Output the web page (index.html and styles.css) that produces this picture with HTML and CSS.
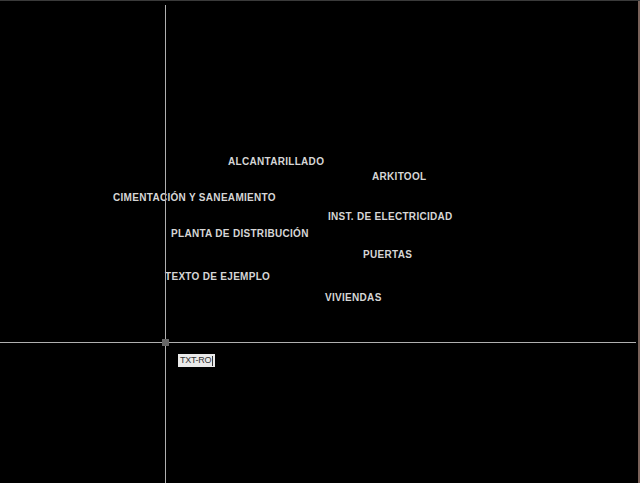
FILE: index.html
```html
<!DOCTYPE html>
<html>
<head>
<meta charset="utf-8">
<link rel="stylesheet" href="styles.css">
</head>
<body>
<div class="canvas">
  <div class="label" style="left:228px;top:155px">ALCANTARILLADO</div>
  <div class="label" style="left:372px;top:170px">ARKITOOL</div>
  <div class="label" style="left:113px;top:191px">CIMENTACIÓN Y SANEAMIENTO</div>
  <div class="label" style="left:328px;top:210px">INST. DE ELECTRICIDAD</div>
  <div class="label" style="left:171px;top:227px">PLANTA DE DISTRIBUCIÓN</div>
  <div class="label" style="left:363px;top:248px">PUERTAS</div>
  <div class="label" style="left:165px;top:270px">TEXTO DE EJEMPLO</div>
  <div class="label" style="left:325px;top:291px">VIVIENDAS</div>
  <div class="vline"></div>
  <div class="hline"></div>
  <div class="pick"></div>
  <div class="tip">TXT-RO<span class="caret"></span></div>
</div>
</body>
</html>
```
FILE: styles.css
```css
html, body {
  margin: 0;
  padding: 0;
  background: #000;
}
.canvas {
  position: relative;
  width: 640px;
  height: 483px;
  background: #000;
  overflow: hidden;
  border-top: 1px solid #3a3a3a;
  box-sizing: border-box;
}
.canvas::after {
  content: "";
  position: absolute;
  right: 0;
  top: 0;
  width: 2px;
  height: 100%;
  background: #7a625a;
}
.label {
  position: absolute;
  font-family: "Liberation Sans", Arial, sans-serif;
  font-weight: bold;
  font-size: 10px;
  line-height: 12px;
  color: #d6d6d6;
  white-space: nowrap;
  letter-spacing: 0.3px;
}
.vline {
  position: absolute;
  left: 165px;
  top: 4px;
  width: 1px;
  height: 480px;
  background: #b0b0b0;
}
.hline {
  position: absolute;
  left: 0;
  top: 341px;
  width: 636px;
  height: 1px;
  background: #b0b0b0;
}
.pick {
  position: absolute;
  left: 162px;
  top: 338px;
  width: 7px;
  height: 7px;
  background: #666;
}
.tip {
  position: absolute;
  left: 178px;
  top: 353px;
  height: 13px;
  padding: 0 2px;
  background: #eaeaea;
  color: #333;
  font-family: "Liberation Sans", Arial, sans-serif;
  font-size: 9px;
  line-height: 13px;
  letter-spacing: -0.3px;
  display: flex;
  align-items: center;
}
.caret {
  display: inline-block;
  width: 1px;
  height: 10px;
  background: #333;
  margin-left: 1px;
}
```
